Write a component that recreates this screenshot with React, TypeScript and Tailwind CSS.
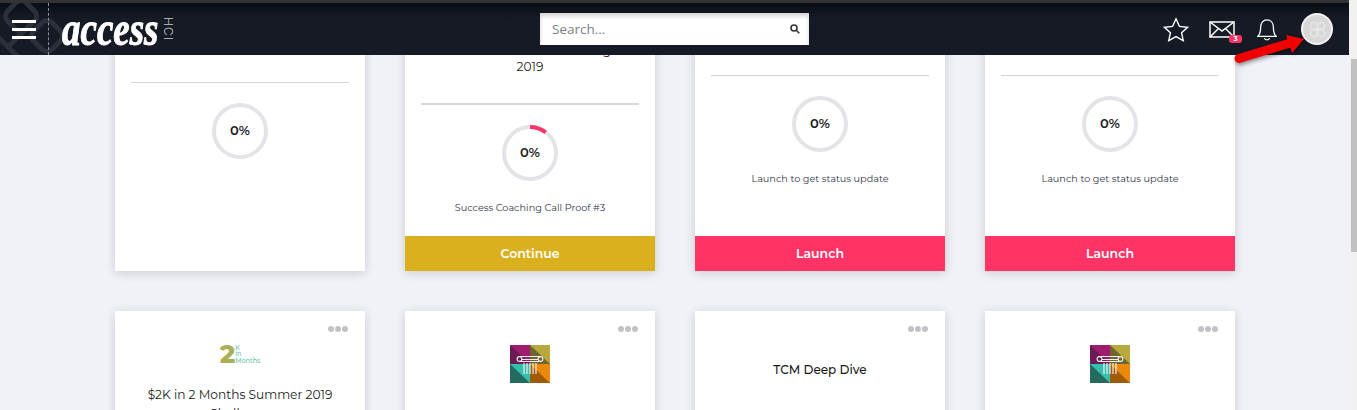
import React from "react";

const Ring = ({ started = false }: { started?: boolean }) => (
  <div className="relative h-[56px] w-[56px]">
    <svg viewBox="0 0 56 56" className="h-full w-full">
      <circle cx="28" cy="28" r="26" fill="none" stroke="#e6e3e8" strokeWidth="4" />
      {started && <path d="M28 2 A26 26 0 0 1 43.7 7.3" fill="none" stroke="#ff3366" strokeWidth="4" />}
    </svg>
    <span className="absolute inset-0 flex items-center justify-center text-[13px] font-semibold text-[#1a1a1a]">0%</span>
  </div>
);

const Dots = () => (
  <div className="absolute right-[17px] top-[15px] flex gap-[1px]">
    <span className="h-[6px] w-[6px] rounded-full bg-[#c2c2c6]" />
    <span className="h-[6px] w-[6px] rounded-full bg-[#c2c2c6]" />
    <span className="h-[6px] w-[6px] rounded-full bg-[#c2c2c6]" />
  </div>
);

const ColumnLogo = () => (
  <svg width="40" height="38" viewBox="0 0 40 38">
    <rect width="20" height="19" fill="#a01c6e" />
    <polygon points="0,0 20,19 0,19" fill="#6b1a55" />
    <rect x="20" width="20" height="19" fill="#b8a93c" />
    <polygon points="20,0 40,19 20,19" fill="#6e6530" />
    <rect y="19" width="20" height="19" fill="#35bfae" />
    <polygon points="0,19 20,38 0,38" fill="#246a5e" />
    <rect x="20" y="19" width="20" height="19" fill="#ea8a0c" />
    <polygon points="20,19 40,38 20,38" fill="#a05a08" />
    <path d="M9 11.5 H31 M12 14.5 H28 M9 16.5 H31" stroke="#f4f0ec" strokeWidth="1.1" />
    <circle cx="9.5" cy="14" r="2.4" fill="none" stroke="#f4f0ec" strokeWidth="1.1" />
    <circle cx="30.5" cy="14" r="2.4" fill="none" stroke="#f4f0ec" strokeWidth="1.1" />
    <path d="M14 18 V29 M17 18 V29 M20 18 V29 M23 18 V29 M26 18 V29" stroke="#f4f0ec" strokeWidth="1.2" />
  </svg>
);

const TopCard = ({
  title,
  status,
  action,
  started,
  pad,
}: {
  title?: React.ReactNode;
  status?: string;
  action?: "Launch" | "Continue";
  started?: boolean;
  pad: string;
}) => (
  <div className="flex h-[271px] flex-col bg-white shadow-[0_2px_10px_rgba(0,0,0,0.16)]">
    <div className={`flex flex-1 flex-col items-center px-[16px] ${pad}`}>
      {title && <p className="mb-[28px] text-center text-[12.2px] leading-[17px] text-[#1a1a1a]">{title}</p>}
      <div className={`w-full ${started ? "border-t-2 border-[#d9d8da]" : "border-t border-[#d5d5d5]"}`} />
      <div className="mt-[20px]">
        <Ring started={started} />
      </div>
      {status && <p className="mt-[20px] text-[9.7px] leading-[14px] text-[#33374a]">{status}</p>}
    </div>
    {action && (
      <div
        className={`flex h-[35px] items-center justify-center pt-[1px] text-[12.5px] font-semibold text-white ${
          action === "Launch" ? "bg-[#ff3366]" : "bg-[#dbb01f]"
        }`}
      >
        {action}
      </div>
    )}
  </div>
);

const LowerCard = ({ children }: { children: React.ReactNode }) => (
  <div className="relative h-[200px] bg-white shadow-[0_2px_10px_rgba(0,0,0,0.16)]">
    <Dots />
    {children}
  </div>
);

export default function App() {
  return (
    <div className="flex h-[410px] overflow-hidden bg-[#f1f1f1] font-['Montserrat','Inter','Liberation_Sans',sans-serif]">
      <div className="relative h-full min-w-0 flex-1 bg-[#f0f2f7]">
        <header className="relative z-10 flex h-[55px] items-center border-t-[3px] border-[#333333] bg-[linear-gradient(#0a0d14,#151a25_30%)]">
          <svg className="absolute left-0 top-0 h-[52px] w-[64px]" viewBox="0 0 64 52" fill="none" stroke="#2c303a" strokeWidth="5">
            <rect x="8" y="0" width="26" height="26" rx="7" transform="rotate(45 21 13)" />
            <rect x="34" y="20" width="26" height="26" rx="7" transform="rotate(45 47 33)" />
            <path d="M-6 30 L24 60 M8 44 L30 22" />
          </svg>
          <div className="relative ml-[12px] flex w-[24px] flex-col gap-[5px]">
            <span className="h-[3px] bg-white" />
            <span className="h-[3px] bg-white" />
            <span className="h-[3px] bg-white" />
          </div>
          <div className="relative ml-[12px] h-full border-l border-dashed border-[#8b8e95]" />
          <div className="relative ml-[13px] w-[96px]">
            <span className="block origin-left scale-x-[0.77] font-['Liberation_Serif',serif] text-[48px] font-bold italic leading-[40px] text-white [-webkit-text-stroke:1px_white]">
              access
            </span>
          </div>
          <span className="ml-[-2px] w-[24px] rotate-90 text-center font-['Inter',sans-serif] text-[12px] font-light tracking-[1px] text-[#c8c9cc]">HCI</span>

          <div className="ml-[360px] flex h-[32px] w-[269px] items-center justify-between bg-white pl-[12px] pr-[9px] shadow-[inset_0_3px_4px_rgba(0,0,0,0.18)]">
            <span className="pt-[1px] font-['Open_Sans',sans-serif] text-[13.5px] font-medium text-[#7a8087]">Search...</span>
            <svg width="10" height="10" viewBox="0 0 10 10" fill="none" stroke="#333" strokeWidth="1.6">
              <circle cx="4" cy="4" r="3" />
              <path d="M6.2 6.2 L9.3 9.3" />
            </svg>
          </div>

          <div className="ml-auto flex items-center pr-[16px]">
            <svg width="26" height="25" viewBox="0 0 28 26" fill="none" stroke="white" strokeWidth="1.5" className="mr-[20px]">
              <path d="M14 1.5 L17.7 9.6 L26.5 10.6 L20 16.5 L21.8 25 L14 20.6 L6.2 25 L8 16.5 L1.5 10.6 L10.3 9.6 Z" />
            </svg>
            <div className="relative mr-[22px] h-[17px] w-[26px]">
              <svg width="26" height="17" viewBox="0 0 26 17" fill="none" stroke="white" strokeWidth="1.5">
                <rect x="1" y="1" width="24" height="15" />
                <path d="M1 1 L13 10 L25 1 M1 16 L9.5 7.5 M25 16 L16.5 7.5" />
              </svg>
              <span className="absolute -bottom-[5px] right-[-7px] flex h-[8px] w-[13px] items-center justify-center rounded-[3px] bg-[#ff3366] text-[7px] font-bold leading-none text-white">3</span>
            </div>
            <svg width="20" height="23" viewBox="0 0 22 25" fill="none" stroke="white" strokeWidth="1.4" className="mr-[24px]">
              <path d="M1 20 C4 17 4 14 4 10 C4 5 7 2 11 2 C15 2 18 5 18 10 C18 14 18 17 21 20 Z" />
              <path d="M8 22 C9 24.5 13 24.5 14 22" />
            </svg>
            <div className="flex h-[32px] w-[32px] items-center justify-center rounded-full border-2 border-[#f4f4f4] bg-[#d8d8d8]">
              <svg width="17" height="17" viewBox="0 0 17 17" fill="none" stroke="#e8e8e8" strokeWidth="1.3">
                <circle cx="5" cy="5" r="3.6" />
                <circle cx="12" cy="5" r="3.6" />
                <circle cx="5" cy="12" r="3.6" />
                <circle cx="12" cy="12" r="3.6" />
                <path d="M5 8.5 H12 M8.5 5 V12" />
              </svg>
            </div>
          </div>
        </header>

        {/* annotation arrow drawn on top of the screenshot */}
        <svg className="absolute left-[1230px] top-[30px] z-20 drop-shadow-[1px_2px_2px_rgba(0,0,0,0.45)]" width="80" height="38" viewBox="0 0 80 38">
          <path d="M9 28.5 L60 13" stroke="#f00000" strokeWidth="9" strokeLinecap="round" />
          <path d="M56 5 L74 9 L62 23 Z" fill="#f00000" />
        </svg>

        <main className="ml-[115px] mr-[114px] -mt-[55px] grid grid-cols-4 gap-[40px]">
          <TopCard pad="pt-[82px]" />
          <TopCard
            pad="pt-[41px]"
            title={
              <>
                Premier Success Coaching
                <br />
                2019
              </>
            }
            status="Success Coaching Call Proof #3"
            action="Continue"
            started
          />
          <TopCard pad="pt-[75px]" status="Launch to get status update" action="Launch" />
          <TopCard pad="pt-[75px]" status="Launch to get status update" action="Launch" />
          <LowerCard>
            <div className="flex flex-col items-center px-[16px] pt-[33px]">
              <div className="flex h-[20px] items-end">
                <span className="text-[26px] font-extrabold leading-[20px] text-[#a9b058]">2</span>
                <span className="text-[6.5px] font-medium leading-[6.5px] text-[#6cc4a5]">
                  K<br />in<br />Months
                </span>
              </div>
              <p className="mt-[21px] text-center text-[12.2px] leading-[19px] text-[#1a1a1a]">
                $2K in 2 Months Summer 2019 Challenge
              </p>
            </div>
          </LowerCard>
          <LowerCard>
            <div className="flex justify-center pt-[34px]">
              <ColumnLogo />
            </div>
          </LowerCard>
          <LowerCard>
            <p className="pt-[50px] text-center text-[12px] font-medium leading-[17px] text-[#1a1a1a]">TCM Deep Dive</p>
          </LowerCard>
          <LowerCard>
            <div className="flex justify-center pt-[34px]">
              <ColumnLogo />
            </div>
          </LowerCard>
        </main>
      </div>
      <div className="h-full w-[8px] pl-[2px] pt-[59px]">
        <div className="h-[193px] bg-[#c1c1c1]" />
      </div>
    </div>
  );
}
